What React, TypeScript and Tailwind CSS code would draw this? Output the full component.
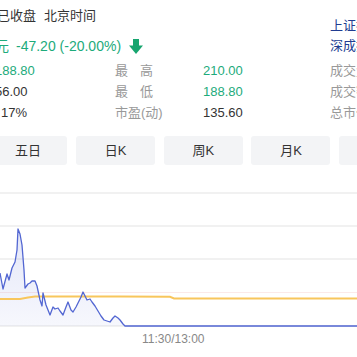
import React from "react";

const blueAbs: [number, number][] = [
  [0, 273], [3, 289], [7, 274], [9, 280], [12, 268], [15, 262], [17, 250], [18, 229], [20, 234], [22, 245], [24, 270], [25, 288], [28, 284], [30, 283], [32, 281], [35, 281], [37, 286], [40, 300], [42, 306], [43, 293], [46, 305], [50, 315], [53, 307], [55, 309], [58, 308], [60, 311], [63, 315], [66, 307], [68, 302], [71, 310], [73, 312], [76, 307], [78, 303], [81, 297], [83, 292], [85, 296], [87, 300], [90, 299], [92, 302], [95, 306], [98, 311], [101, 316], [104, 320], [107, 321], [110, 322], [113, 318], [115, 316], [118, 318], [120, 320], [123, 324], [125, 326], [357, 326],
];
const yellowAbs: [number, number][] = [
  [0, 299], [20, 299], [28, 297.5], [35, 296.5], [120, 296.5], [170, 296.8], [174, 298.5], [357, 298.5],
];
const OFF = 185;
const toPath = (pts: [number, number][]) =>
  pts.map((p, i) => `${i === 0 ? "M" : "L"}${p[0]},${p[1] - OFF}`).join(" ");

export default function App() {
  const bluePath = toPath(blueAbs);
  const fillPath = `${bluePath} L357,${326 - OFF} L0,${326 - OFF} Z`;
  return (
    <div className="relative w-[357px] h-[357px] overflow-hidden bg-white font-['Liberation_Sans','Noto_Sans_CJK_SC',sans-serif] text-[13px] text-[#333]">
      {/* top section */}
      <div className="flex h-[60px]">
        <div className="w-[330px] shrink-0 pt-[6px]">
          <div className="h-[20px] flex items-center ml-[-3px] whitespace-nowrap text-[13px] text-[#333]">
            <span>已收盘</span>
            <span className="ml-[8px]">北京时间</span>
          </div>
          <div className="h-[20px] mt-[10px] flex items-center whitespace-nowrap text-[14px] text-[#1dab7b]">
            <span className="ml-[-5px]">元</span>
            <span className="ml-[7px]">-47.20 (-20.00%)</span>
            <svg className="ml-[8px]" width="14" height="15" viewBox="0 0 14 15">
              <rect x="4" y="0" width="6" height="7" fill="#17a56f" />
              <polygon points="0,6.5 14,6.5 7,15" fill="#17a56f" />
            </svg>
          </div>
        </div>
        <div className="pt-[16px] text-[13px] text-[#213c91] whitespace-nowrap">
          <div className="h-[20px] flex items-center">上证指数</div>
          <div className="h-[20px] flex items-center">深成指数</div>
        </div>
      </div>

      {/* data rows */}
      <div className="flex flex-col text-[13px] whitespace-nowrap">
        <div className="h-[21px] flex items-center">
          <div className="w-[115px] shrink-0 text-[#1dab7b]"><span className="ml-[-5px]">188.80</span></div>
          <div className="w-[88px] shrink-0 text-[#999]">最<span className="ml-[12px]">高</span></div>
          <div className="w-[127px] shrink-0 text-[#1dab7b]">210.00</div>
          <div className="text-[#999]">成交量</div>
        </div>
        <div className="h-[21px] flex items-center">
          <div className="w-[115px] shrink-0 text-[#333]"><span className="ml-[-5px]">56.00</span></div>
          <div className="w-[88px] shrink-0 text-[#999]">最<span className="ml-[12px]">低</span></div>
          <div className="w-[127px] shrink-0 text-[#1dab7b]">188.80</div>
          <div className="text-[#999]">成交额</div>
        </div>
        <div className="h-[21px] flex items-center">
          <div className="w-[115px] shrink-0 text-[#333]"><span className="ml-[1px]">17%</span></div>
          <div className="w-[88px] shrink-0 text-[#999]">市盈(动)</div>
          <div className="w-[127px] shrink-0 text-[#333]">135.60</div>
          <div className="text-[#999]">总市值</div>
        </div>
      </div>

      {/* tabs */}
      <div className="mt-[13px] flex gap-[8.7px] ml-[-11.6px]">
        {["五日", "日K", "周K", "月K", "年K"].map((t) => (
          <div
            key={t}
            className="w-[79px] h-[29px] shrink-0 rounded-[3px] bg-[#f3f4f6] flex items-center justify-center text-[13px] text-[#333]"
          >
            {t}
          </div>
        ))}
      </div>

      {/* chart */}
      <div className="mt-[20px]">
        <svg width="357" height="146" viewBox="0 0 357 146" className="block">
          <defs>
            <linearGradient id="bf" x1="0" y1="0" x2="0" y2="1">
              <stop offset="0%" stopColor="#5468d4" stopOpacity="0.16" />
              <stop offset="100%" stopColor="#5468d4" stopOpacity="0.05" />
            </linearGradient>
          </defs>
          <line x1="0" y1="8" x2="357" y2="8" stroke="#f1f1f1" strokeWidth="2" />
          <line x1="0" y1="41" x2="357" y2="41" stroke="#f1f1f1" strokeWidth="2" />
          <line x1="0" y1="74" x2="357" y2="74" stroke="#f1f1f1" strokeWidth="2" />
          <line x1="0" y1="107.5" x2="357" y2="107.5" stroke="#fbeaea" strokeWidth="1" />
          <line x1="0" y1="141" x2="357" y2="141" stroke="#f1f1f1" strokeWidth="2" />
          <path d={fillPath} fill="url(#bf)" />
          <path d={toPath(yellowAbs)} fill="none" stroke="#f8c65c" strokeWidth="2" />
          <path d={bluePath} fill="none" stroke="#5266d2" strokeWidth="1.3" strokeLinejoin="round" />
        </svg>
        <div className="h-[16px] flex items-center pl-[142px] text-[12px] text-[#888]">11:30/13:00</div>
      </div>
    </div>
  );
}
